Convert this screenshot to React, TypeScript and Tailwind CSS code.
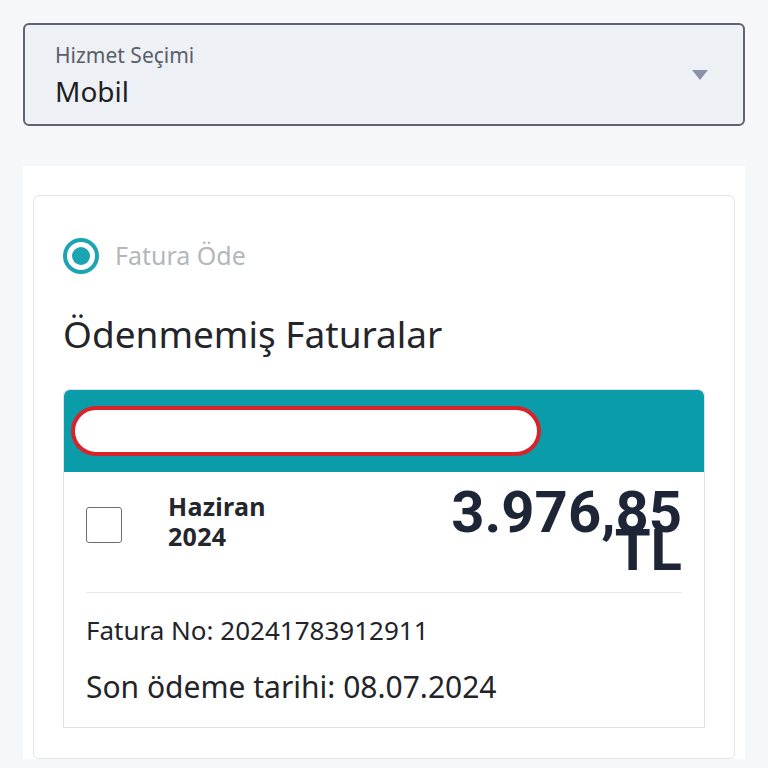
import React from 'react';

const Caret = () => (
  <svg width="18" height="12" viewBox="0 0 18 12" className="text-[#8b91a8]">
    <path d="M1 1h16L9 11z" fill="currentColor" />
  </svg>
);

const App: React.FC = () => {
  return (
    <div className="h-[768px] w-[768px] overflow-hidden bg-[#f5f7f9] px-[23px] pt-[23px] font-['Noto_Sans',sans-serif]">
      <div className="flex h-[103px] items-center justify-between rounded-[6px] border-2 border-[#5d6372] bg-[#edf1f5] pl-[30px] pr-[34px]">
        <div className="flex flex-col self-start pt-[17px]">
          <span className="text-[21px] leading-[26px] text-[#5a5f66]">Hizmet Seçimi</span>
          <span className="mt-[3px] text-[28px] leading-[40px] text-[#1d1f23]">Mobil</span>
        </div>
        <Caret />
      </div>

      <div className="mt-[40px] bg-white px-[10px] pt-[29px]">
        <div className="rounded-[6px] border border-[#e2e4e6] px-[29px] pb-[30px] pt-[41px]">
          <div className="flex items-center gap-[16px]">
            <span className="flex h-[36px] w-[36px] items-center justify-center rounded-full border-[4px] border-[#1ba4b1]">
              <span className="h-[18px] w-[18px] rounded-full bg-[#1ba4b1]" />
            </span>
            <span className="text-[25px] text-[#b3b7bb]">Fatura Öde</span>
          </div>

          <h2 className="mt-[37px] text-[37px] leading-[44px] text-[#23252a]">Ödenmemiş Faturalar</h2>

          <div className="mt-[33px] rounded-t-[6px] border border-[#dfe2e4]">
            <div className="flex h-[82px] items-center rounded-t-[6px] bg-[#0a9ca8] pl-[7px]">
              <div className="h-[50px] w-[470px] rounded-[28px] border-[4px] border-[#d8232a] bg-white" />
            </div>
            <div className="px-[22px]">
              <div className="flex h-[121px] items-start border-b border-[#e4e6e8]">
                <span className="mt-[35px] h-[36px] w-[36px] rounded-[3px] border-[1.5px] border-[#6b6e72] bg-white" />
                <div className="ml-[46px] mt-[19px] flex flex-col text-[25px] font-bold leading-[30px] tracking-[0.3px] text-[#23262c]">
                  <span>Haziran</span>
                  <span>2024</span>
                </div>
                <div className="ml-auto mt-[21px] flex flex-col items-end font-['Roboto',sans-serif] text-[58px] font-bold leading-[38px] text-[#1e2537]">
                  <span>3.976,85</span>
                  <span>TL</span>
                </div>
              </div>
              <p className="mt-[21px] text-[26px] leading-[32px] text-[#222429]">Fatura No: 20241783912911</p>
              <p className="mt-[24px] pb-[23px] text-[30px] leading-[34px] text-[#222429]">Son ödeme tarihi: 08.07.2024</p>
            </div>
          </div>
        </div>
      </div>
    </div>
  );
};

export default App;
